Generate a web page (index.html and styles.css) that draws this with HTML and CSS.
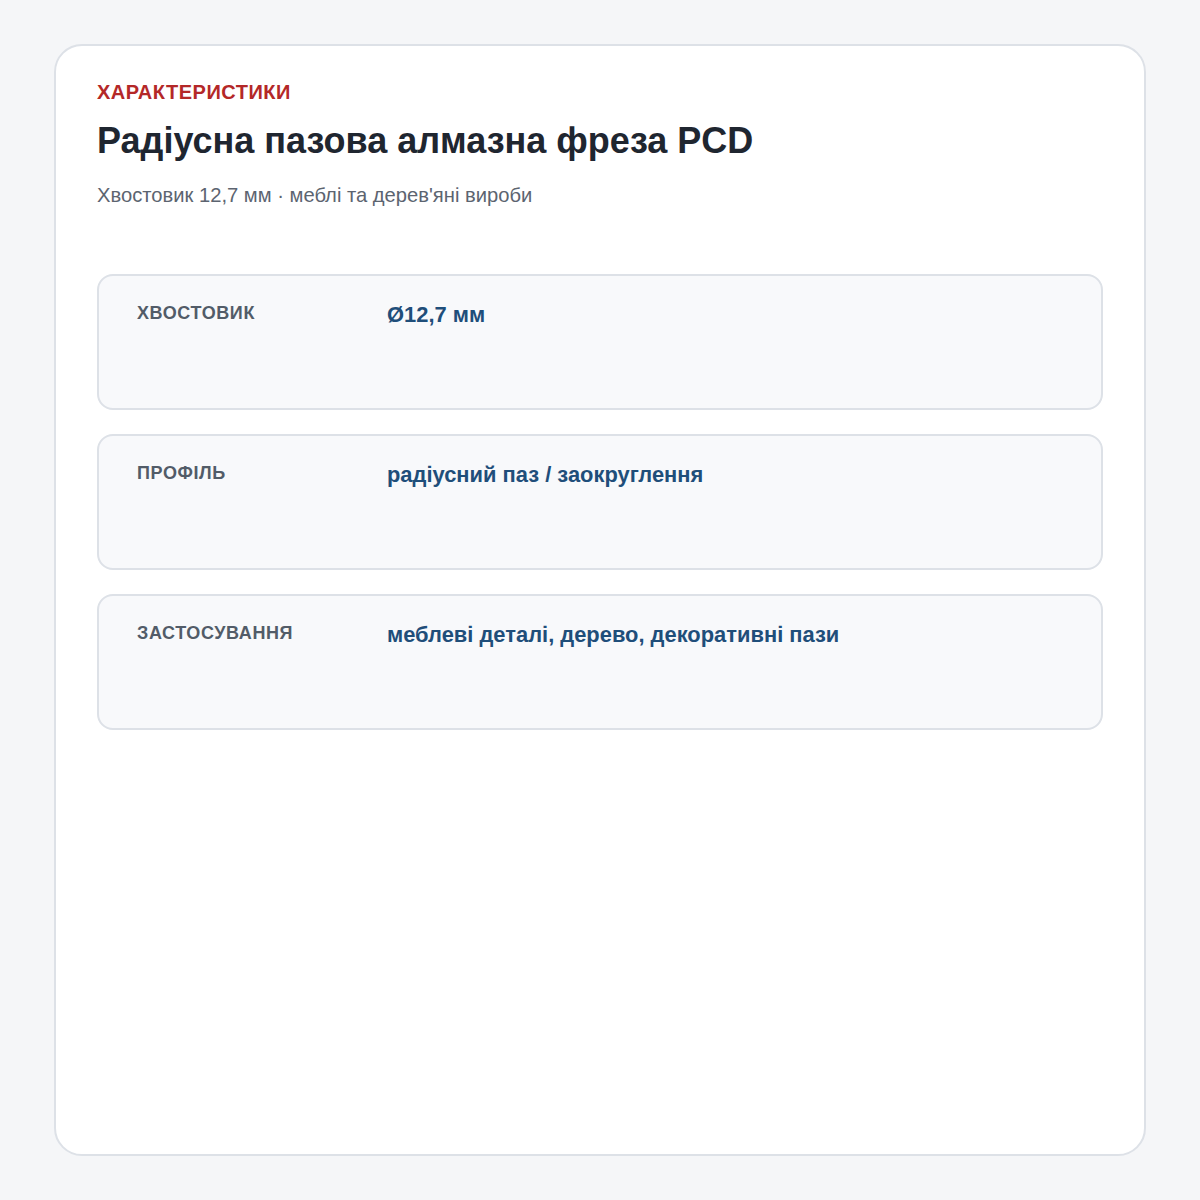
FILE: index.html
```html
<!DOCTYPE html>
<html lang="uk">
<head>
<meta charset="utf-8">
<link rel="stylesheet" href="styles.css">
</head>
<body>
<main class="card">
  <div class="eyebrow">ХАРАКТЕРИСТИКИ</div>
  <h1 class="title">Радіусна пазова алмазна фреза PCD</h1>
  <p class="subtitle">Хвостовик 12,7 мм · меблі та дерев'яні вироби</p>
  <div class="rows">
    <div class="row">
      <div class="label">Хвостовик</div>
      <div class="value">Ø12,7 мм</div>
    </div>
    <div class="row">
      <div class="label">Профіль</div>
      <div class="value">радіусний паз / заокруглення</div>
    </div>
    <div class="row">
      <div class="label">Застосування</div>
      <div class="value">меблеві деталі, дерево, декоративні пази</div>
    </div>
  </div>
</main>
</body>
</html>
```
FILE: styles.css
```css
html, body {
  margin: 0;
  padding: 0;
}
body {
  background: #f5f6f8;
  font-family: "Liberation Sans", Arial, sans-serif;
  padding: 44px 54px;
  box-sizing: border-box;
  height: 1200px;
}
.card {
  box-sizing: border-box;
  height: 1112px;
  background: #ffffff;
  border: 2px solid #dde1e7;
  border-radius: 28px;
  padding: 34px 41px;
}
.eyebrow {
  color: #b42828;
  font-weight: 700;
  font-size: 20px;
  line-height: 24px;
  letter-spacing: 0.5px;
}
.title {
  margin: 15px 0 0;
  color: #1f2630;
  font-size: 36px;
  line-height: 44px;
  font-weight: 700;
}
.subtitle {
  margin: 20px 0 0;
  color: #5c6470;
  font-size: 20.2px;
  line-height: 24px;
}
.rows {
  margin-top: 67px;
  display: flex;
  flex-direction: column;
  gap: 24px;
}
.row {
  box-sizing: border-box;
  height: 136px;
  background: #f8f9fb;
  border: 2px solid #dde1e7;
  border-radius: 16px;
  padding: 25px 38px;
  display: grid;
  grid-template-columns: 250px 1fr;
  align-items: start;
}
.label {
  color: #525c68;
  font-weight: 700;
  font-size: 18px;
  line-height: 24px;
  text-transform: uppercase;
  letter-spacing: 0.6px;
}
.value {
  color: #1f4e7a;
  font-weight: 700;
  font-size: 21.9px;
  line-height: 28px;
}
```
